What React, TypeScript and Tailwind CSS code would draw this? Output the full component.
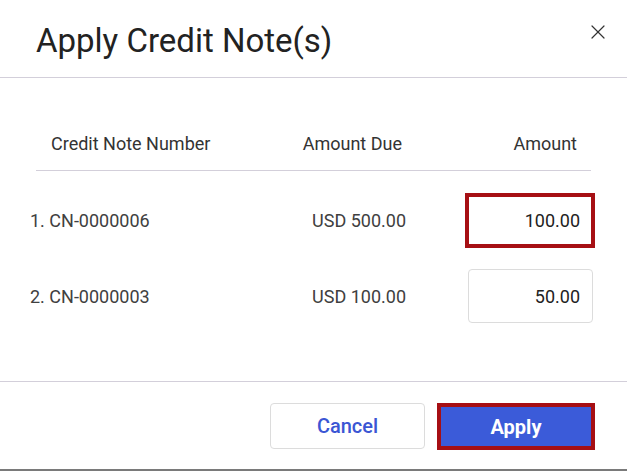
import { X } from 'lucide-react'

const rows = [
  { n: '1. CN-0000006', due: 'USD 500.00', amount: '100.00', focused: true },
  { n: '2. CN-0000003', due: 'USD 100.00', amount: '50.00', focused: false },
]

export default function App() {
  return (
    <div className="w-[627px] h-[471px] bg-white flex flex-col border-b-2 border-[#7a7a7a] font-['Roboto',_sans-serif] text-[#404040]">
      <div className="h-[78px] flex items-center justify-between pl-[36px] pr-[17px] border-b border-[#d3cfda] shrink-0">
        <h1 className="text-[33px] text-[#222] pt-[4px]">Apply Credit Note(s)</h1>
        <button className="text-[#333] pb-[13px]">
          <X size={24} strokeWidth={1.2} />
        </button>
      </div>

      <div className="flex-1 pt-[38px]">
        <div className="mx-[36px] h-[55px] flex items-center border-b border-[#d3cfda] text-[18px] text-[#333]">
          <div className="w-[254px] pl-[15px]">Credit Note Number</div>
          <div className="w-[112px] text-right">Amount Due</div>
          <div className="flex-1 text-right pr-[14px]">Amount</div>
        </div>

        <div className="pt-[11px]">
          {rows.map((r) => (
            <div key={r.n} className="h-[76px] flex items-center pl-[30px] pr-[32px] text-[18px]">
              <div className="w-[260px]">{r.n}</div>
              <div className="w-[116px] text-right">{r.due}</div>
              <div className="flex-1 flex justify-end">
                {r.focused ? (
                  <div className="w-[130px] h-[55px] border-4 border-[#a60f14] flex items-center justify-end pr-[11px] text-[#222]">
                    {r.amount}
                  </div>
                ) : (
                  <div className="w-[125px] h-[54px] mr-[2px] border border-[#dcdcdc] rounded-[4px] flex items-center justify-end pr-[12px] text-[#222]">
                    {r.amount}
                  </div>
                )}
              </div>
            </div>
          ))}
        </div>
      </div>

      <div className="h-[88px] shrink-0 border-t border-[#d3cfda] flex items-start justify-end gap-[12px] pt-[21px] pr-[32px]">
        <button className="w-[155px] h-[46px] border border-[#dcdcdc] rounded-[4px] text-[20px] font-medium text-[#3b56d4]">
          Cancel
        </button>
        <button className="w-[158px] h-[47px] border-4 border-[#a60f14] bg-[#3b5bd9] text-[20px] font-bold text-white">
          Apply
        </button>
      </div>
    </div>
  )
}
